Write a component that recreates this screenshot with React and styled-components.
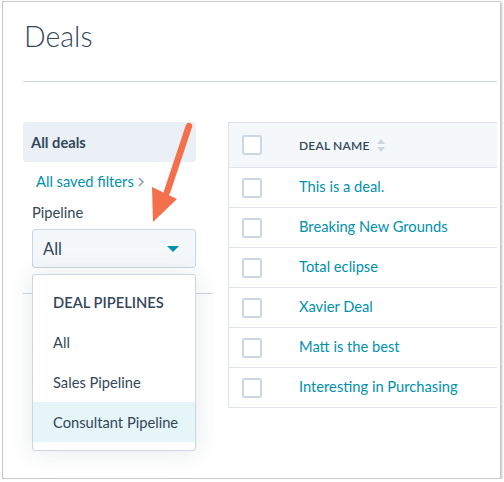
import React from 'react'
import styled, { createGlobalStyle } from 'styled-components'

const GlobalStyle = createGlobalStyle`
  html, body {
    margin: 0;
    padding: 0;
    background: #ffffff;
  }
  body {
    font-family: Lato, "Noto Sans", sans-serif;
    color: #33475b;
  }
`

const Frame = styled.div`
  position: relative;
  box-sizing: border-box;
  width: 499px;
  height: 478px;
  margin: 1px 0 0 2px;
  border: 1px solid #c9c9c9;
  box-shadow: 1px 2px 2px rgba(0, 0, 0, 0.25);
  background: #ffffff;
  padding: 0 3px 0 20px;
  overflow: hidden;
`

const Header = styled.div`
  height: 79px;
  border-bottom: 1px solid #cbd6e2;
  display: flex;
  align-items: flex-start;
`

const Title = styled.h1`
  margin: 17px 0 0 1px;
  font-size: 28.5px;
  font-weight: 300;
  line-height: 34px;
  color: #33475b;
`

const Main = styled.div`
  display: flex;
  gap: 32px;
  padding-top: 40px;
`

const Sidebar = styled.div`
  width: 173px;
  flex-shrink: 0;
  display: flex;
  flex-direction: column;
`

const ViewItem = styled.div`
  height: 40px;
  display: flex;
  align-items: center;
  padding-left: 8px;
  background: #eaf0f6;
  border-radius: 3px;
  font-size: 14.7px;
  font-weight: 700;
  color: #33475b;
`

const SavedLink = styled.a`
  margin: 11px 0 0 13px;
  font-size: 14.7px;
  line-height: 17px;
  color: #0091ae;
  text-decoration: none;
  display: flex;
  align-items: center;
  gap: 4px;
`

const Label = styled.div`
  margin: 14px 0 0 9px;
  font-size: 14.7px;
  line-height: 17px;
  color: #33475b;
`

const SelectWrap = styled.div`
  position: relative;
  margin: 8px 0 0 9px;
`

const Select = styled.div`
  box-sizing: border-box;
  height: 39px;
  display: flex;
  align-items: center;
  justify-content: space-between;
  padding: 0 16px 0 10px;
  border: 1px solid #cbd6e2;
  border-radius: 3px;
  background: #f5f8fa;
  font-size: 16.5px;
  color: #33475b;
`

const Caret = styled.span`
  width: 0;
  height: 0;
  border-left: 6px solid transparent;
  border-right: 6px solid transparent;
  border-top: 6px solid #0091ae;
`

const Separator = styled.div`
  margin-top: 25px;
  border-top: 1px solid #cbd6e2;
  width: 190px;
`

const Dropdown = styled.div`
  position: absolute;
  top: 45px;
  left: 0;
  width: 164px;
  box-sizing: border-box;
  padding: 7px 0 8px;
  background: #ffffff;
  border: 1px solid #cbd6e2;
  border-radius: 3px;
  box-shadow: 0 1px 24px rgba(45, 62, 80, 0.12);
  z-index: 2;
`

const DropItem = styled.div`
  height: 40px;
  display: flex;
  align-items: center;
  padding-left: 20px;
  font-size: 14.7px;
  font-weight: ${p => (p.$heading ? 600 : 400)};
  text-transform: ${p => (p.$heading ? 'uppercase' : 'none')};
  color: #33475b;
  background: ${p => (p.$active ? '#e5f5f8' : 'transparent')};
`

const Table = styled.div`
  flex: 1;
  border: 1px solid #dfe3eb;
  border-right: none;
`

const Row = styled.div`
  height: ${p => (p.$head ? '44px' : '39px')};
  display: flex;
  align-items: center;
  background: ${p => (p.$head ? '#f5f8fa' : '#ffffff')};
  border-top: ${p => (p.$head ? 'none' : '1px solid #dfe3eb')};
`

const CheckCell = styled.div`
  width: 70px;
  padding-left: 13px;
  box-sizing: border-box;
  flex-shrink: 0;
`

const Checkbox = styled.div`
  box-sizing: border-box;
  width: 20px;
  height: 20px;
  border: 2px solid #cbd6e2;
  border-radius: 3px;
  background: #ffffff;
`

const HeadText = styled.div`
  display: flex;
  align-items: center;
  gap: 7px;
  font-size: 12px;
  font-weight: 600;
  letter-spacing: 0.2px;
  color: #33475b;
`

const DealLink = styled.a`
  font-size: 14.7px;
  line-height: 17px;
  margin-top: -2px;
  color: #0091ae;
  text-decoration: none;
`

const Arrow = styled.svg`
  position: absolute;
  left: 0;
  top: 0;
  pointer-events: none;
  z-index: 3;
`

const deals = [
  'This is a deal.',
  'Breaking New Grounds',
  'Total eclipse',
  'Xavier Deal',
  'Matt is the best',
  'Interesting in Purchasing',
]

const SortIcon = () => (
  <svg width="8" height="13" viewBox="0 0 8 13">
    <path d="M4 0 L8 5 H0 Z" fill="#cbd6e2" />
    <path d="M4 13 L8 8 H0 Z" fill="#cbd6e2" />
  </svg>
)

export default function App() {
  return (
    <>
      <GlobalStyle />
      <Frame>
        <Header>
          <Title>Deals</Title>
        </Header>
        <Main>
          <Sidebar>
            <ViewItem>All deals</ViewItem>
            <SavedLink>
              All saved filters
              <svg width="6" height="10" viewBox="0 0 6 10">
                <path d="M1 1 L5 5 L1 9" fill="none" stroke="#7c98b6" strokeWidth="1.4" />
              </svg>
            </SavedLink>
            <Label>Pipeline</Label>
            <SelectWrap>
              <Select>
                All
                <Caret />
              </Select>
              <Dropdown>
                <DropItem $heading>Deal pipelines</DropItem>
                <DropItem>All</DropItem>
                <DropItem>Sales Pipeline</DropItem>
                <DropItem $active>Consultant Pipeline</DropItem>
              </Dropdown>
            </SelectWrap>
            <Separator />
          </Sidebar>
          <Table>
            <Row $head>
              <CheckCell>
                <Checkbox />
              </CheckCell>
              <HeadText>
                DEAL NAME
                <SortIcon />
              </HeadText>
            </Row>
            {deals.map(d => (
              <Row key={d}>
                <CheckCell>
                  <Checkbox />
                </CheckCell>
                <DealLink>{d}</DealLink>
              </Row>
            ))}
          </Table>
        </Main>
        <Arrow width="499" height="478" viewBox="0 0 499 478">
          <line x1="186" y1="124" x2="164" y2="190" stroke="#f4704d" strokeWidth="6.5" strokeLinecap="round" />
          <path d="M149 185 L174 197 L150 220 Z" fill="#f4704d" />
        </Arrow>
      </Frame>
    </>
  )
}
